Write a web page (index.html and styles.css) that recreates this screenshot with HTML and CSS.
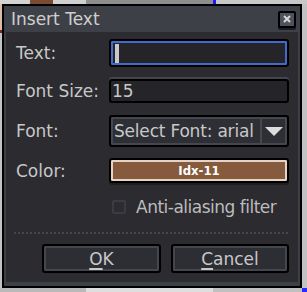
FILE: index.html
```html
<!DOCTYPE html>
<html lang="en">
<head>
  <meta charset="UTF-8">
  <title>Insert Text</title>
  <link rel="stylesheet" href="styles.css">
</head>
<body>
  <div class="strip top">
    <span class="s1"></span><span class="s2"></span><span class="s3"></span><span class="s4"></span><span class="s5"></span><span class="s6"></span>
  </div>
  <div class="mid">
    <div class="left"><span class="tan"></span><span class="red"></span></div>

    <div class="win">
      <div class="title">
        <span class="name">Insert Text</span>
        <span class="close">
          <svg width="8" height="8" viewBox="0 0 8 8"><path d="M1 1L7 7M7 1L1 7" stroke="#d6d6d6" stroke-width="2" fill="none"/></svg>
        </span>
      </div>

      <div class="body">
        <div class="row">
          <label>Text:</label>
          <div class="entry focus"><span class="caret"></span></div>
        </div>
        <div class="row size">
          <label>Font Size:</label>
          <div class="entry plain">15</div>
        </div>
        <div class="row font">
          <label>Font:</label>
          <div class="combo">
            <span class="ctext">Select Font: arial</span>
            <span class="arrow"></span>
          </div>
        </div>
        <div class="row clr">
          <label>Color:</label>
          <div class="color">Idx-11</div>
        </div>
        <div class="check">
          <span class="box"></span>Anti-aliasing filter
        </div>

        <div class="sep"></div>

        <div class="btns">
          <button class="ok"><u>O</u>K</button>
          <button class="cancel"><u>C</u>ancel</button>
        </div>
      </div>
    </div>

    <div class="right"></div>
  </div>
  <div class="strip bottom">
    <span class="b1"></span><span class="b2"></span><span class="b3"></span><span class="b4"></span>
  </div>
</body>
</html>
```

FILE: styles.css
```css
body { margin: 0; width: 307px; height: 292px; overflow: hidden; background: #c2c2c2; font-family: "DejaVu Sans", sans-serif; font-size: 17px; color: #c8c8c8; }

/* desktop behind the dialog */
.strip { display: flex; height: 4px; }
.strip span { display: block; height: 100%; }
.top .s1 { width: 30px; background: #d3d3d3; }
.top .s2 { width: 23px; background: #7b4a30; }
.top .s3 { width: 33px; background: #d0d0d0; }
.top .s4 { width: 127px; background: #8e8e8e; }
.top .s5 { width: 3px; background: #1a1aff; }
.top .s6 { width: 91px; background: #c8c8c8; }
.bottom .b1 { width: 86px; background: #b9b9b9; }
.bottom .b2 { width: 127px; background: #dedede; }
.bottom .b3 { width: 89px; background: #c0c0c0; }
.bottom .b4 { width: 5px; background: #2a2aff; }
.mid { display: flex; height: 284px; }
.left { width: 2px; display: flex; flex-direction: column; }
.left .tan { height: 26px; background: #d9bca4; }
.left .red { height: 3px; background: #7b2b22; }
.right { width: 5px; }

/* window */
.win { width: 300px; box-sizing: border-box; border: 2px solid #000; background: #3e4048; display: flex; flex-direction: column; }
.title { height: 26px; display: flex; align-items: center; padding: 0 4px 0 7px; color: #cfcfcf; }
.title .name { flex: 1; }
.close { width: 18px; height: 17px; box-sizing: border-box; border: 2px solid #000; border-radius: 2px; background: #50525b; box-shadow: 0 2px 0 #1c1c20; display: flex; align-items: center; justify-content: center; }
.close svg { display: block; }

.body { flex: 1; margin: 0 2px 4px; background: #2b2b30; padding: 7px 9px 0 10px; }
.row { display: flex; align-items: center; }
.row label { width: 93px; flex: none; }

.entry { width: 180px; height: 28px; box-sizing: border-box; border: 2px solid #000; border-radius: 3px; background: #252529; display: flex; align-items: center; }
.focus { box-shadow: inset 0 0 0 2px #3f6bcf; padding-left: 4px; }
.caret { width: 4px; height: 19px; background: #c8c8c8; }
.size { margin-top: 12px; }
.plain { height: 24px; padding-left: 1px; box-shadow: 0 -2px 0 #44464e; }

.font { margin-top: 12px; }
.combo { width: 180px; height: 32px; box-sizing: border-box; padding: 2px; border: 2px solid #000; border-radius: 3px; background: #2e2f35; box-shadow: inset 0 0 0 2px #45474f; display: flex; }
.ctext { flex: 1; display: flex; align-items: center; padding-left: 1px; letter-spacing: -0.2px; }
.arrow { width: 23px; border-left: 2px solid #45474f; display: flex; align-items: center; justify-content: center; }
.arrow::after { content: ""; border-left: 9px solid transparent; border-right: 9px solid transparent; border-top: 9px solid #dcdcdc; }

.clr { margin-top: 11px; }
.color { width: 180px; height: 25px; box-sizing: border-box; border: 2px solid #000; border-radius: 3px; background: #865a3d; box-shadow: inset 0 0 0 2px #e6d3c6, 0 2px 0 #1d1d21; color: #fff; font-family: "DejaVu Sans Condensed", "DejaVu Sans", sans-serif; font-weight: bold; font-size: 13px; display: flex; align-items: center; justify-content: center; }

.check { margin: 14px 0 0 96px; height: 20px; display: flex; align-items: center; color: #bcbcbc; letter-spacing: -0.5px; }
.check .box { width: 14px; height: 14px; box-sizing: border-box; border: 2px solid #3b3c43; border-radius: 2px; margin-right: 10px; }

.sep { margin: 15px 1px 0 -2px; height: 2px; background: repeating-linear-gradient(90deg, #45474f 0 2px, transparent 2px 4px); }

.btns { display: flex; justify-content: flex-end; gap: 10px; margin-top: 10px; }
.btns button { height: 29px; box-sizing: border-box; padding: 0; border: 2px solid #000; border-radius: 3px; background: #2d2e34; box-shadow: inset 0 0 0 2px #44464e; font: inherit; color: #c8c8c8; }
.btns .ok { width: 119px; }
.btns .cancel { width: 118px; }
u { text-decoration-thickness: 2px; text-underline-offset: 3px; }
```
